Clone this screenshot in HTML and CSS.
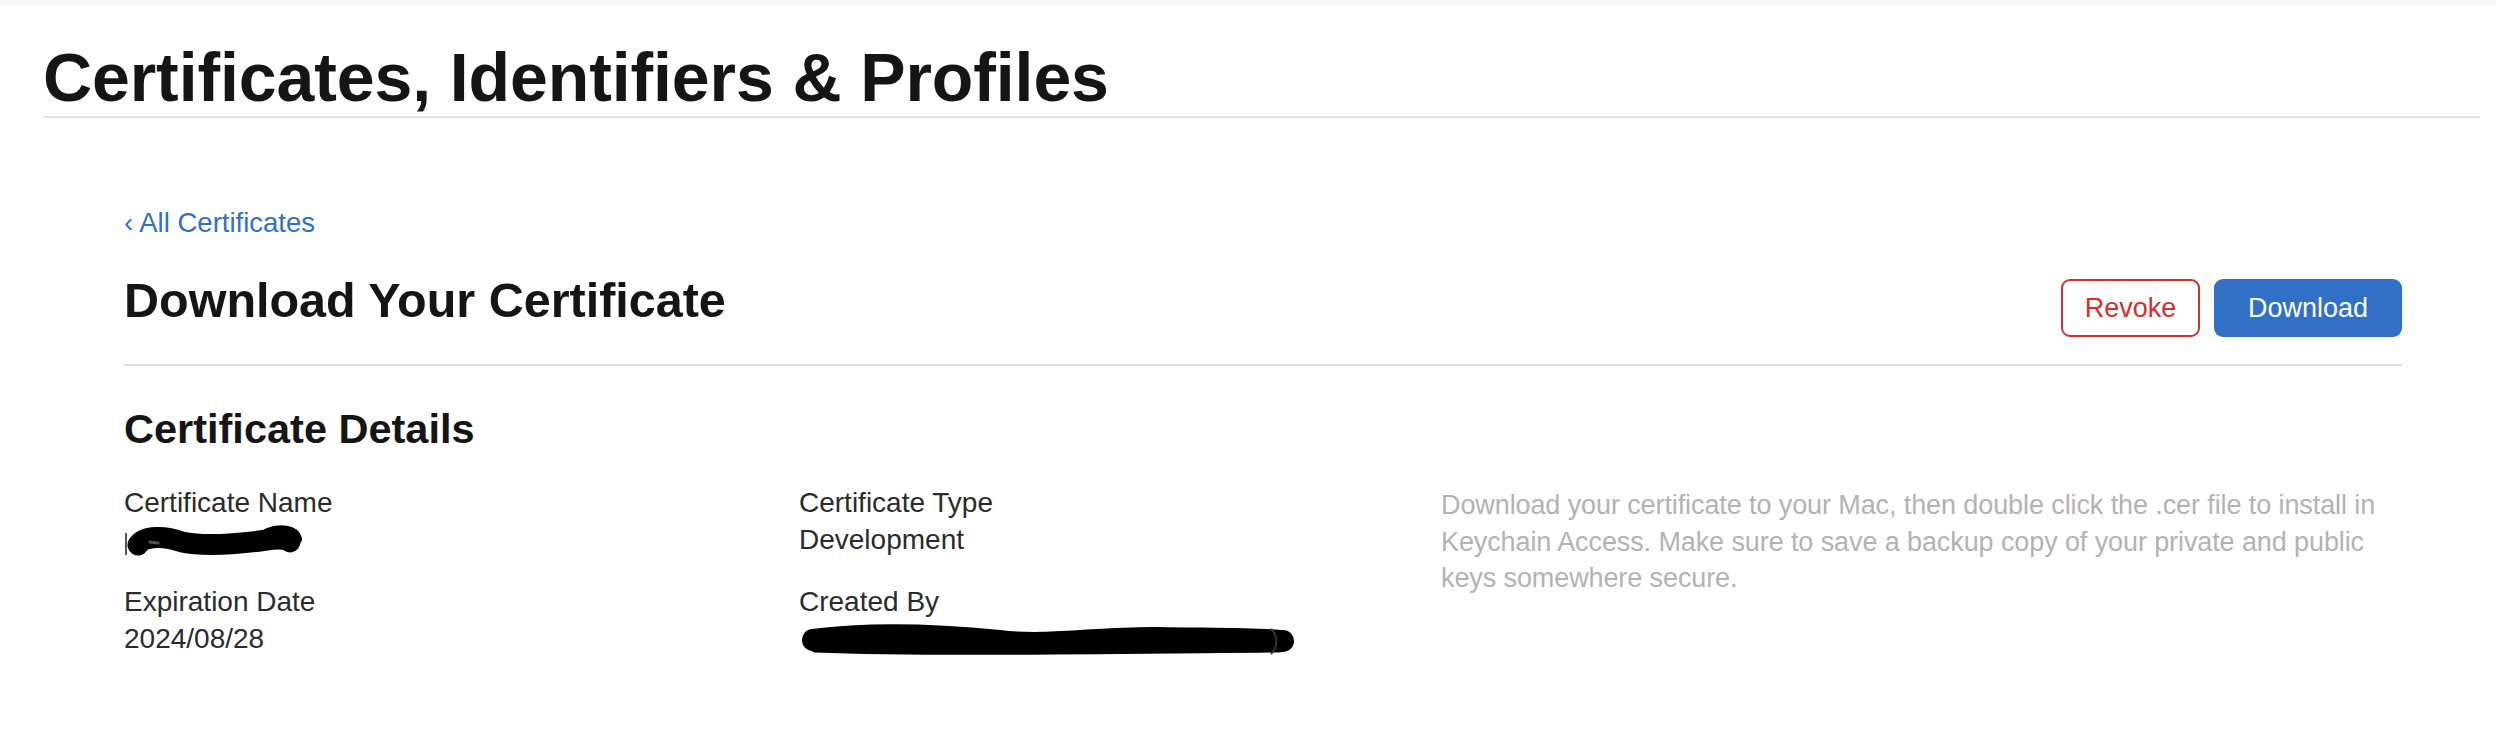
FILE: index.html
```html
<!DOCTYPE html>
<html lang="en">
<head>
<meta charset="utf-8">
<title>Certificates, Identifiers &amp; Profiles</title>
<link rel="stylesheet" href="styles.css">
</head>
<body>
<div class="topbar"></div>
<header class="page-header">
  <h1 class="page-title">Certificates, Identifiers &amp; Profiles</h1>
</header>
<main class="content">
  <a class="back-link" href="#">‹ All Certificates</a>
  <div class="heading-row">
    <h2 class="section-title">Download Your Certificate</h2>
    <div class="actions">
      <button class="btn btn-revoke">Revoke</button>
      <button class="btn btn-download">Download</button>
    </div>
  </div>
  <h3 class="details-title">Certificate Details</h3>
  <div class="details-grid">
    <div class="col">
      <div class="field">
        <div class="label">Certificate Name</div>
        <div class="value redacted">
          <svg class="blob" width="178" height="34" viewBox="0 0 178 34">
            <path d="M2 8 L2 30" stroke="#555" stroke-width="2"/>
            <path d="M14 20 C 20 10, 42 11, 58 17 C 82 22, 112 19, 136 16 C 150 14, 160 12, 166 17" fill="none" stroke="#000" stroke-width="21" stroke-linecap="round"/>
            <path d="M144 9 C 156 4, 170 6, 172 14" fill="none" stroke="#000" stroke-width="12" stroke-linecap="round"/>
            <path d="M26 17 L34 18" stroke="#555" stroke-width="3" stroke-linecap="round"/>
          </svg>
        </div>
      </div>
      <div class="field">
        <div class="label">Expiration Date</div>
        <div class="value">2024/08/28</div>
      </div>
    </div>
    <div class="col">
      <div class="field">
        <div class="label">Certificate Type</div>
        <div class="value">Development</div>
      </div>
      <div class="field">
        <div class="label">Created By</div>
        <div class="value redacted">
          <svg class="blob" width="500" height="34" viewBox="0 0 500 34">
            <path d="M14 16 C 60 10, 120 9, 200 17 C 250 23, 300 13, 360 14 C 420 15, 465 15, 484 17" fill="none" stroke="#000" stroke-width="22" stroke-linecap="round"/>
            <path d="M16 24 C 120 28, 260 26, 480 24" fill="none" stroke="#000" stroke-width="9" stroke-linecap="round"/>
            <path d="M472 5 C 479 11, 479 23, 472 30" fill="none" stroke="#333" stroke-width="2"/>
          </svg>
        </div>
      </div>
    </div>
    <p class="description">Download your certificate to your Mac, then double click the .cer file to install in Keychain Access. Make sure to save a backup copy of your private and public keys somewhere secure.</p>
  </div>
</main>
</body>
</html>
```

FILE: styles.css
```css
* { box-sizing: border-box; }

body {
  margin: 0;
  background: #ffffff;
  font-family: "Liberation Sans", Arial, sans-serif;
  color: #1d1d1f;
}

.topbar {
  height: 5px;
  background: #f8f8f8;
}

.page-header {
  margin: 0 16px 0 43px;
  padding-top: 33px;
  border-bottom: 2px solid #e2e2e2;
}

.page-title {
  margin: 0;
  font-size: 68px;
  line-height: 78px;
  font-weight: 700;
  letter-spacing: -0.1px;
  color: #151515;
}

.content {
  margin: 0 94px 0 124px;
  padding-top: 87px;
}

.back-link {
  display: block;
  font-size: 27.5px;
  line-height: 36px;
  color: #3270c4;
  text-decoration: none;
}

.heading-row {
  display: flex;
  justify-content: space-between;
  align-items: flex-start;
  margin-top: 31px;
  padding-bottom: 27px;
  border-bottom: 2px solid #dedede;
}

.section-title {
  margin: 0;
  font-size: 48.5px;
  line-height: 56px;
  font-weight: 700;
  color: #151515;
}

.actions {
  display: flex;
  gap: 14px;
  margin-top: 7px;
}

.btn {
  height: 58px;
  border-radius: 9px;
  font-family: "Liberation Sans", Arial, sans-serif;
  font-size: 27px;
  padding: 0;
  cursor: pointer;
}

.btn-revoke {
  width: 139px;
  background: #ffffff;
  border: 2px solid #d2302d;
  color: #d2302d;
}

.btn-download {
  width: 188px;
  background: #3170c6;
  border: none;
  color: #ffffff;
}

.details-title {
  margin: 39px 0 0 0;
  font-size: 41.5px;
  line-height: 48px;
  font-weight: 700;
  color: #151515;
}

.details-grid {
  display: grid;
  grid-template-columns: 675px 642px 1fr;
  margin-top: 31px;
}

.col {
  display: flex;
  flex-direction: column;
  gap: 25px;
}

.label, .value {
  font-size: 28px;
  line-height: 37px;
  color: #2b2b2b;
}

.redacted {
  display: flex;
  align-items: center;
  height: 37px;
}

.blob {
  display: block;
  margin-top: 4px;
}

.description {
  margin: 3px 0 0 0;
  font-size: 27px;
  line-height: 36.5px;
  letter-spacing: -0.1px;
  color: #b3b3b3;
}
```
